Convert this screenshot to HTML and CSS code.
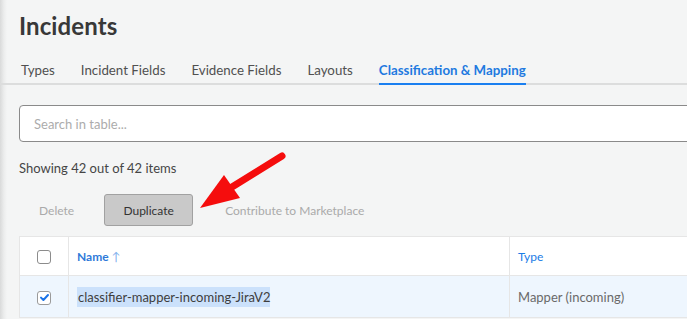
FILE: index.html
```html
<!DOCTYPE html>
<html lang="en">

<head>
    <meta charset="UTF-8">
    <meta name="viewport" content="width=device-width, initial-scale=1.0">
    <title>Incidents - Classification &amp; Mapping</title>
    <link rel="stylesheet" href="styles.css">
</head>

<body>

    <div class="page">
        <h1 class="title">Incidents</h1>

        <nav class="tabs">
            <a href="#" class="tab">Types</a>
            <a href="#" class="tab">Incident Fields</a>
            <a href="#" class="tab">Evidence Fields</a>
            <a href="#" class="tab">Layouts</a>
            <a href="#" class="tab active">Classification &amp; Mapping</a>
        </nav>

        <div class="content">
            <input class="search" type="text" placeholder="Search in table...">

            <p class="count">Showing 42 out of 42 items</p>

            <div class="actions">
                <button class="action" disabled>Delete</button>
                <button class="action primary">Duplicate</button>
                <button class="action" disabled>Contribute to Marketplace</button>
            </div>

            <table class="grid">
                <thead>
                    <tr>
                        <th class="check-col"><span class="checkbox"></span></th>
                        <th class="name-col">Name <span class="sort">&uarr;</span></th>
                        <th class="type-col">Type</th>
                    </tr>
                </thead>
                <tbody>
                    <tr class="selected">
                        <td class="check-col">
                            <span class="checkbox checked">
                                <svg width="11" height="11" viewBox="0 0 11 11">
                                    <path d="M2 5.6 L4.4 8 L9 3" fill="none" stroke="#1a73e8" stroke-width="2" stroke-linecap="round" stroke-linejoin="round" />
                                </svg>
                            </span>
                        </td>
                        <td><span class="highlight">classifier-mapper-incoming-JiraV2</span></td>
                        <td class="type-cell">Mapper (incoming)</td>
                    </tr>
                </tbody>
            </table>
        </div>
    </div>

    <!-- annotation arrow drawn over the screenshot -->
    <svg class="annotation" width="687" height="319" viewBox="0 0 687 319">
        <line x1="282" y1="156" x2="232" y2="187" stroke="#f50d0d" stroke-width="7" stroke-linecap="round" />
        <polygon points="200,208 224,175 240,198" fill="#f50d0d" />
    </svg>

</body>

</html>
```

FILE: styles.css
```css
/* RESET */
* {
    margin: 0;
    padding: 0;
    box-sizing: border-box;
}

body {
    font-family: 'Lato', 'Liberation Sans', sans-serif;
    background: linear-gradient(to right, #d9dada 0, #eceded 4px, #f4f5f5 7px);
    background-color: #f4f5f5;
    color: #444;
    width: 687px;
    height: 319px;
    overflow: hidden;
    position: relative;
}

.page {
    padding-top: 11px;
}

/* HEADER */
.title {
    font-size: 24px;
    font-weight: 700;
    line-height: 30px;
    color: #383838;
    padding-left: 19px;
    letter-spacing: 0.1px;
}

.tabs {
    display: flex;
    gap: 26px;
    margin-top: 21px;
    padding-left: 21px;
    border-bottom: 2px solid #dcdddd;
}

.tab {
    font-size: 13.3px;
    color: #505050;
    text-decoration: none;
    padding-bottom: 5px;
    margin-bottom: -2px;
    border-bottom: 2px solid transparent;
}

.tab.active {
    color: #1f7ae0;
    font-weight: 700;
    border-bottom-color: #1a7ff0;
}

/* CONTENT */
.content {
    padding-left: 19px;
    padding-top: 20px;
}

.search {
    display: block;
    width: 700px;
    height: 37px;
    border: 1px solid #8a8a8a;
    border-radius: 4px;
    background: #fff;
    padding: 0 14px;
    font-family: inherit;
    font-size: 13px;
    color: #444;
}

.search::placeholder {
    color: #acacac;
}

.count {
    font-size: 13px;
    color: #454545;
    margin-top: 18px;
    line-height: 16px;
}

.actions {
    display: flex;
    align-items: center;
    margin-top: 18px;
}

.action {
    font-family: inherit;
    font-size: 12px;
    background: none;
    border: none;
    color: #aaa;
    height: 32px;
    padding: 0 20px;
}

.action.primary {
    background-color: #c9c9c9;
    border: 1px solid #a1a1a1;
    border-radius: 3px;
    color: #333;
    width: 89px;
    padding: 0;
    margin-left: 10px;
    margin-right: 12px;
}

/* TABLE */
.grid {
    margin-top: 10px;
    border-collapse: collapse;
    background: #fff;
    width: 700px;
    font-size: 13px;
}

.grid th,
.grid td {
    text-align: left;
    border: 1px solid #e6e6e6;
    padding: 0 8px;
}

.grid th {
    height: 39px;
    color: #2f7ad9;
    font-weight: 700;
    font-size: 12px;
}

.grid td {
    height: 42px;
    color: #4a4a4a;
}

.check-col {
    width: 49px;
    text-align: center !important;
}

.name-col {
    width: 441px;
}

.grid .type-col {
    color: #1a7ce6;
    font-weight: 400;
}

.sort {
    color: #7fb0ec;
    font-weight: 400;
}

.selected td {
    background-color: #eef6fe;
}

.type-cell {
    color: #6a6a6a !important;
}

.highlight {
    background-color: #cbe1fb;
    color: #3e3e3e;
    padding: 2px 0 2px 1px;
}

.checkbox {
    display: inline-flex;
    align-items: center;
    justify-content: center;
    width: 14px;
    height: 14px;
    border: 1px solid #8c8c8c;
    border-radius: 3px;
    background: #fff;
    vertical-align: middle;
}

.checkbox.checked {
    border-color: #9a9a9a;
}

/* ANNOTATION */
.annotation {
    position: absolute;
    left: 0;
    top: 0;
    pointer-events: none;
}
```
